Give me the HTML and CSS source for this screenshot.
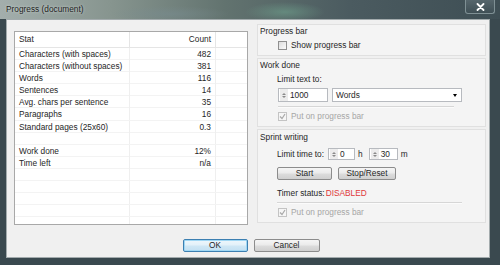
FILE: index.html
```html
<!DOCTYPE html>
<html>
<head>
<meta charset="utf-8">
<link rel="stylesheet" href="styles.css">
</head>
<body>
<div class="window">
  <div class="titlebar">
    <span class="title">Progress (document)</span>
    <div class="close"><svg width="9" height="8" viewBox="0 0 9 8"><path d="M1.5 1 L7.5 7 M7.5 1 L1.5 7" stroke="#fff" stroke-width="1.8" stroke-linecap="round"/></svg></div>
  </div>
  <div class="frame">
    <div class="client">
      <div class="main">
        <div class="list">
          <div class="row head"><div class="c1">Stat</div><div class="c2">Count</div><div class="c3"></div></div>
          <div class="row"><div class="c1">Characters (with spaces)</div><div class="c2">482</div><div class="c3"></div></div>
          <div class="row"><div class="c1">Characters (without spaces)</div><div class="c2">381</div><div class="c3"></div></div>
          <div class="row"><div class="c1">Words</div><div class="c2">116</div><div class="c3"></div></div>
          <div class="row"><div class="c1">Sentences</div><div class="c2">14</div><div class="c3"></div></div>
          <div class="row"><div class="c1">Avg. chars per sentence</div><div class="c2">35</div><div class="c3"></div></div>
          <div class="row"><div class="c1">Paragraphs</div><div class="c2">16</div><div class="c3"></div></div>
          <div class="row"><div class="c1">Standard pages (25x60)</div><div class="c2">0.3</div><div class="c3"></div></div>
          <div class="row"><div class="c1"></div><div class="c2"></div><div class="c3"></div></div>
          <div class="row"><div class="c1">Work done</div><div class="c2">12%</div><div class="c3"></div></div>
          <div class="row"><div class="c1">Time left</div><div class="c2">n/a</div><div class="c3"></div></div>
          <div class="row"><div class="c1"></div><div class="c2"></div><div class="c3"></div></div>
          <div class="row"><div class="c1"></div><div class="c2"></div><div class="c3"></div></div>
          <div class="row"><div class="c1"></div><div class="c2"></div><div class="c3"></div></div>
          <div class="row"><div class="c1"></div><div class="c2"></div><div class="c3"></div></div>
          <div class="row"><div class="c1"></div><div class="c2"></div><div class="c3"></div></div>
          <div class="row"><div class="c1"></div><div class="c2"></div><div class="c3"></div></div>
        </div>
        <div class="side">
          <div class="group g1">
            <div class="glabel">Progress bar</div>
            <div class="check-row first"><span class="cb"></span><span>Show progress bar</span></div>
          </div>
          <div class="group g2">
            <div class="glabel">Work done</div>
            <div class="line l-limit">Limit text to:</div>
            <div class="inputs">
              <div class="spin s-text"><span class="arrows"><i class="up"></i><i class="dn"></i></span><span class="val">1000</span></div>
              <div class="combo"><span>Words</span><i class="drop"></i></div>
            </div>
            <div class="sep s2"></div>
            <div class="check-row dis"><span class="cb checked"><svg width="7" height="7" viewBox="0 0 7 7"><path d="M1 3.5 L3 5.5 L6 1" fill="none" stroke="#a9a9a9" stroke-width="1.2"/></svg></span><span>Put on progress bar</span></div>
          </div>
          <div class="group g3">
            <div class="glabel">Sprint writing</div>
            <div class="time-row">
              <span>Limit time to:</span>
              <div class="spin s-h"><span class="arrows"><i class="up"></i><i class="dn"></i></span><span class="val">0</span></div>
              <span class="unit">h</span>
              <div class="spin s-m"><span class="arrows"><i class="up"></i><i class="dn"></i></span><span class="val">30</span></div>
              <span class="unit">m</span>
            </div>
            <div class="btn-row">
              <button class="btn b-start">Start</button>
              <button class="btn b-stop">Stop/Reset</button>
            </div>
            <div class="line status">Timer status:<span class="red">DISABLED</span></div>
            <div class="sep s3"></div>
            <div class="check-row dis"><span class="cb checked"><svg width="7" height="7" viewBox="0 0 7 7"><path d="M1 3.5 L3 5.5 L6 1" fill="none" stroke="#a9a9a9" stroke-width="1.2"/></svg></span><span>Put on progress bar</span></div>
          </div>
        </div>
      </div>
      <div class="footer">
        <button class="btn ok">OK</button>
        <button class="btn cancel">Cancel</button>
      </div>
    </div>
  </div>
</div>
</body>
</html>
```
FILE: styles.css
```css
* { box-sizing: border-box; }
body {
  margin: 0;
  font-family: "Liberation Sans", Arial, sans-serif;
  font-size: 8.3px;
  color: #262626;
}
.window {
  width: 500px;
  height: 265px;
  display: flex;
  flex-direction: column;
  background: #3a494f;
}
.titlebar {
  height: 19px;
  display: flex;
  align-items: flex-start;
  background:
    radial-gradient(ellipse 40px 10px at 285px 12px, rgba(110,160,140,0.6), rgba(110,160,140,0) 100%),
    radial-gradient(ellipse 60px 8px at 170px 14px, rgba(120,140,145,0.5), rgba(120,140,145,0) 100%),
    linear-gradient(90deg, #a3aeac 0%, #87958f 22%, #62736f 45%, #4b5b60 70%, #3e4e54 100%);
}
.title {
  margin: 5px 0 0 6px;
  line-height: 9px;
  color: #1f1f1f;
  text-shadow: 0 0 3px rgba(225,232,230,0.85);
}
.close {
  margin-left: auto;
  margin-right: 5px;
  width: 30px;
  height: 14px;
  border: 1px solid #7f9094;
  border-top: none;
  border-radius: 0 0 3px 3px;
  background: linear-gradient(#56666c, #3f4f55);
  display: flex;
  align-items: center;
  justify-content: center;
}
.frame {
  flex: 1;
  padding: 0 10px 7px 6px;
  display: flex;
}
.client {
  flex: 1;
  border: 1px solid #a3abad;
  background: #f0f0f0;
  padding: 4px 3px 5px 7px;
  display: flex;
  flex-direction: column;
}
.main {
  display: flex;
  align-items: flex-start;
  gap: 9px;
}
.list {
  width: 234px;
  height: 194px;
  margin-top: 7px;
  border: 1px solid #a8a8a8;
  background: #fff;
  overflow: hidden;
}
.row {
  display: grid;
  grid-template-columns: 115px 86px 1fr;
  height: 12.1px;
  line-height: 12px;
  border-bottom: 1px solid #f3f3f3;
}
.row.head {
  height: 16px;
  line-height: 15px;
  border-bottom: 1px solid #e5e5e5;
}
.c1 { padding-left: 4px; border-right: 1px solid #efefef; white-space: nowrap; overflow: hidden; }
.c2 { text-align: right; padding-right: 4px; border-right: 1px solid #efefef; }
.head .c1, .head .c2 { border-right-color: #e5e5e5; }
.side {
  width: 229px;
  display: flex;
  flex-direction: column;
  gap: 2px;
}
.group {
  border: 1px solid #e0e0e0;
  background: #f4f4f4;
  padding: 1px 2px 0;
  display: flex;
  flex-direction: column;
}
.g1 { height: 32px; }
.g2 { height: 69px; }
.g3 { height: 94px; padding-top: 2px; }
.glabel { line-height: 10px; }
.check-row {
  margin-left: 18px;
  display: flex;
  align-items: center;
  gap: 4px;
  height: 10px;
  line-height: 10px;
  margin-top: 3px;
}
.check-row.first { margin-top: 4px; }
.check-row.dis { color: #a6a6a6; }
.cb {
  width: 9px;
  height: 9px;
  border: 1px solid #8f8f8f;
  background: linear-gradient(135deg, #dcdcdc, #fafafa);
  display: flex;
  align-items: center;
  justify-content: center;
}
.cb.checked { border-color: #c4c4c4; background: #f6f6f6; }
.line { margin-left: 17px; line-height: 10px; height: 10px; }
.l-limit { margin-top: 4px; }
.inputs {
  margin-left: 18px;
  margin-top: 4px;
  display: flex;
  gap: 4px;
}
.spin {
  height: 14px;
  border: 1px solid #b7babf;
  background: #fff;
  display: flex;
  align-items: center;
}
.arrows {
  width: 8px;
  height: 100%;
  margin-left: 1px;
  display: flex;
  flex-direction: column;
  align-items: center;
  justify-content: center;
  gap: 1px;
  background: #ececec;
}
.arrows i { display: block; width: 0; height: 0; border-left: 2.5px solid transparent; border-right: 2.5px solid transparent; }
.arrows .up { border-bottom: 2.5px solid #8a8a8a; }
.arrows .dn { border-top: 2.5px solid #8a8a8a; }
.val { margin-left: 2px; line-height: 10px; }
.s-text { width: 50px; }
.combo {
  width: 130px;
  height: 14px;
  border: 1px solid #b7babf;
  background: #fff;
  display: flex;
  align-items: center;
  justify-content: space-between;
  padding: 0 4px 0 3px;
}
.drop { width: 0; height: 0; border-left: 2.5px solid transparent; border-right: 2.5px solid transparent; border-top: 3px solid #000; }
.sep { margin-left: 18px; height: 2px; border-top: 1px solid #d6d6d6; border-bottom: 1px solid #fbfbfb; }
.s2 { width: 176px; margin-top: 4px; }
.s3 { width: 185px; margin-left: 17px; margin-top: 4px; }
.time-row {
  margin-left: 17px;
  margin-top: 6px;
  display: flex;
  align-items: center;
  height: 12px;
}
.time-row .spin { height: 12px; }
.s-h { width: 27px; margin-left: 4px; }
.s-m { width: 29px; margin-left: 6px; }
.unit { margin-left: 3px; }
.btn-row {
  margin-left: 17px;
  margin-top: 7px;
  display: flex;
  gap: 6px;
}
.btn {
  height: 13px;
  padding: 0;
  border: 1px solid #8c8c8c;
  border-radius: 2px;
  background: linear-gradient(#f5f5f5 0%, #ebebeb 45%, #dcdcdc 55%, #cfcfcf 100%);
  font: inherit;
  color: #262626;
  line-height: 11px;
  display: flex;
  align-items: center;
  justify-content: center;
}
.b-start { width: 55px; }
.b-stop { width: 58px; }
.status { margin-top: 8px; }
.red { color: #e0383a; margin-left: 1px; }
.footer {
  margin-top: 14px;
  display: flex;
  justify-content: center;
  gap: 6px;
  padding-left: 2px;
}
.ok {
  width: 65px;
  border-color: #3c7fb1;
  background: linear-gradient(#eef7fc 0%, #e3f1f9 45%, #cfe7f5 55%, #c3e0f2 100%);
  box-shadow: inset 0 0 0 1px #9fd7f4;
}
.cancel { width: 66px; }
```
